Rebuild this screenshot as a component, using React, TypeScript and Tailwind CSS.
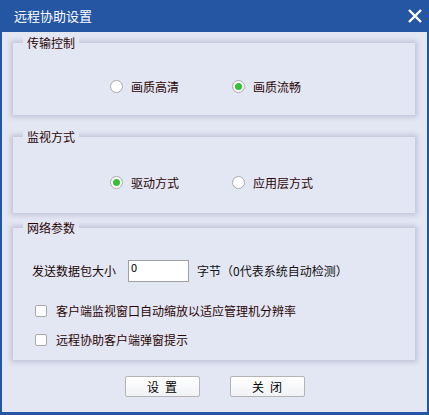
import React from "react";

const font = { fontFamily: '"Noto Sans CJK SC", "Liberation Sans", sans-serif' };

function Radio({ checked, label }: { checked?: boolean; label: string }) {
  return (
    <div className="flex items-center gap-[8px]">
      <div className="w-[13px] h-[13px] rounded-full border border-[#a9a9a9] bg-white flex items-center justify-center">
        {checked && <div className="w-[7px] h-[7px] rounded-full bg-[#35c035]" />}
      </div>
      <span className="text-[12px] text-[#2a0505] leading-none">{label}</span>
    </div>
  );
}

function Check({ label }: { label: string }) {
  return (
    <div className="flex items-center gap-[9px]">
      <div className="w-[12px] h-[12px] rounded-[2px] border border-[#a9a9a9] bg-white" />
      <span className="text-[12px] text-[#2a0505] leading-none">{label}</span>
    </div>
  );
}

function Group({ title, className, children }: { title: string; className: string; children: React.ReactNode }) {
  return (
    <div className={"relative bg-[#e3e6f3] shadow-[0_0_5px_2px_rgba(60,66,110,0.22)] " + className}>
      <div className="absolute left-[10px] top-[-7px] px-[4px] bg-[#e3e6f3] text-[12px] leading-[14px] text-[#2a0505]">
        {title}
      </div>
      {children}
    </div>
  );
}

export default function App() {
  return (
    <div className="w-[429px] h-[415px] bg-[#2556a3] flex flex-col" style={font}>
      {/* title bar */}
      <div className="h-[32px] flex items-center justify-between pl-[14px] pr-[6px]">
        <span className="text-white text-[13px]">远程协助设置</span>
        <svg width="16" height="16" viewBox="0 0 16 16">
          <path d="M2 2 L14 14 M14 2 L2 14" stroke="white" strokeWidth="2.4" />
        </svg>
      </div>

      {/* body */}
      <div className="flex-1 mx-[2px] mb-[3px] bg-[#e3e6f3] flex flex-col px-[11px] pt-[11px] pr-[12px]">
        <Group title="传输控制" className="h-[72px] flex items-start pt-[37px] pl-[97px] gap-[53px]">
          <Radio label="画质高清" />
          <Radio checked label="画质流畅" />
        </Group>

        <Group title="监视方式" className="mt-[22px] h-[76px] flex items-start pt-[39px] pl-[97px] gap-[53px]">
          <Radio checked label="驱动方式" />
          <Radio label="应用层方式" />
        </Group>

        <Group title="网络参数" className="mt-[15px] h-[132px] flex flex-col pl-[19px] pt-[32px]">
          <div className="flex items-center">
            <span className="text-[12px] text-[#1a0505] w-[96px]">发送数据包大小</span>
            <div className="w-[61px] h-[22px] bg-white border border-[#a0a0a0] text-[11px] leading-[13px] pl-[2px] text-black">
              0
            </div>
            <span className="text-[12px] text-[#111] ml-[8px]">字节（0代表系统自动检测）</span>
          </div>
          <div className="mt-[23px] pl-[3px]">
            <Check label="客户端监视窗口自动缩放以适应管理机分辨率" />
          </div>
          <div className="mt-[17px] pl-[3px]">
            <Check label="远程协助客户端弹窗提示" />
          </div>
        </Group>

        <div className="flex justify-center gap-[30px] mt-[16px] pl-[1px]">
          <button className="w-[75px] h-[21px] bg-gradient-to-b from-white to-[#f1f2f6] border border-[#b4b4b4] rounded-[2px] text-[12px] tracking-[6px] pl-[6px] text-black">
            设置
          </button>
          <button className="w-[75px] h-[21px] bg-gradient-to-b from-white to-[#f1f2f6] border border-[#b4b4b4] rounded-[2px] text-[12px] tracking-[6px] pl-[6px] text-black">
            关闭
          </button>
        </div>
      </div>
    </div>
  );
}
